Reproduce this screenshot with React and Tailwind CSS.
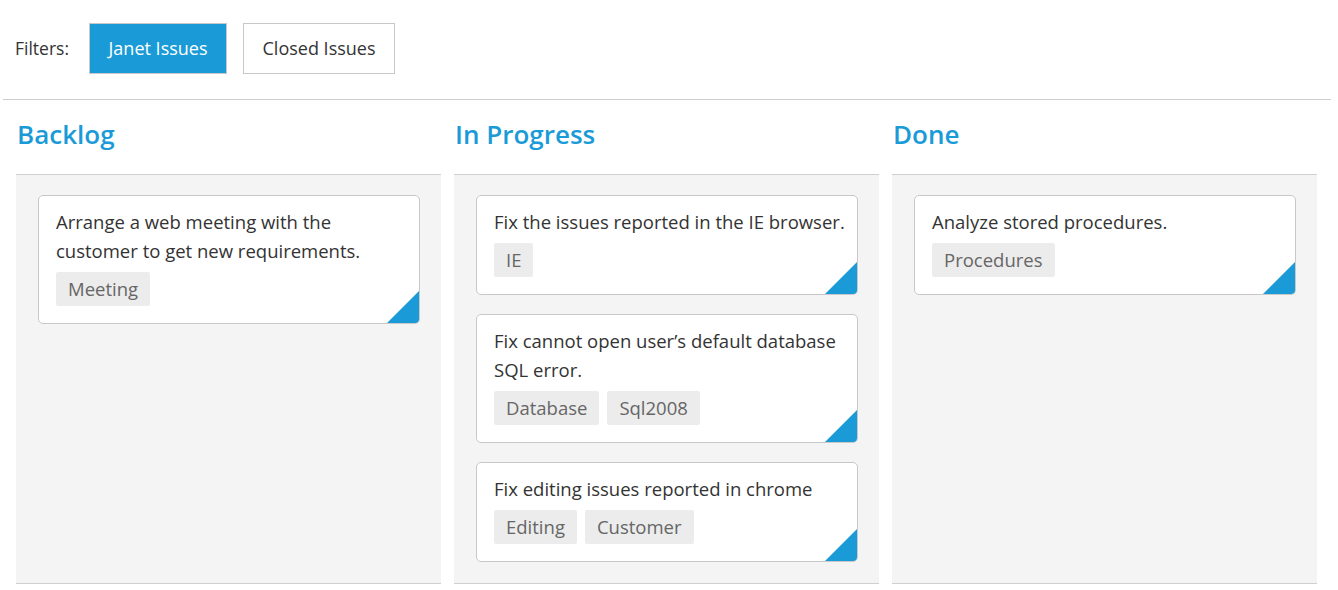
import React from "react";

const columns = [
  {
    title: "Backlog",
    cards: [
      { text: "Arrange a web meeting with the customer to get new requirements.", tags: ["Meeting"] },
    ],
  },
  {
    title: "In Progress",
    cards: [
      { text: "Fix the issues reported in the IE browser.", tags: ["IE"] },
      { text: "Fix cannot open user’s default database SQL error.", tags: ["Database", "Sql2008"] },
      { text: "Fix editing issues reported in chrome", tags: ["Editing", "Customer"] },
    ],
  },
  {
    title: "Done",
    cards: [{ text: "Analyze stored procedures.", tags: ["Procedures"] }],
  },
];

function Card({ text, tags }) {
  return (
    <div className="relative overflow-hidden rounded-[5px] border border-[#c8c8c8] bg-white pl-[17px] pr-[10px] pt-[11px] pb-[17px]">
      <p className="text-[18.5px] leading-[29px] text-[#333]">{text}</p>
      <div className="mt-[7px] flex gap-[8px]">
        {tags.map((t) => (
          <span key={t} className="h-[34px] rounded-[2px] bg-[#ececec] px-[12px] text-[18.5px] leading-[34px] text-[#666]">
            {t}
          </span>
        ))}
      </div>
      {/* corner marker */}
      <div className="absolute bottom-0 right-0 h-0 w-0 border-b-[32px] border-l-[32px] border-b-[#1a9bd7] border-l-transparent" />
    </div>
  );
}

export default function App() {
  return (
    <div className="min-h-[590px] bg-white text-[#333]" style={{ fontFamily: "'Open Sans', sans-serif" }}>
      <div className="ml-[3px] mr-[7px] flex h-[100px] items-center border-b border-[#cfcfcf] pb-[3px] pl-[12px]">
        <span className="mr-[20px] text-[17.5px] text-[#333]">Filters:</span>
        <button className="h-[51px] w-[138px] border border-[#c8c8c8] bg-[#1a9bd7] text-[18px] text-white">Janet Issues</button>
        <button className="ml-[16px] h-[51px] w-[152px] border border-[#c8c8c8] bg-white text-[18px] text-[#333]">Closed Issues</button>
      </div>
      <div className="flex gap-[13px] pl-[16px]">
        {columns.map((col) => (
          <div key={col.title} className="w-[425px]">
            <div className="flex h-[74px] items-center pb-[5px] pl-[1px]">
              <h2 className="text-[26px] font-semibold text-[#1a9bd7]">{col.title}</h2>
            </div>
            <div className="flex h-[410px] flex-col gap-[19px] border-y border-[#cfcfcf] bg-[#f4f4f4] pb-[20px] pl-[22px] pr-[21px] pt-[20px]">
              {col.cards.map((c) => (
                <Card key={c.text} {...c} />
              ))}
            </div>
          </div>
        ))}
      </div>
    </div>
  );
}
